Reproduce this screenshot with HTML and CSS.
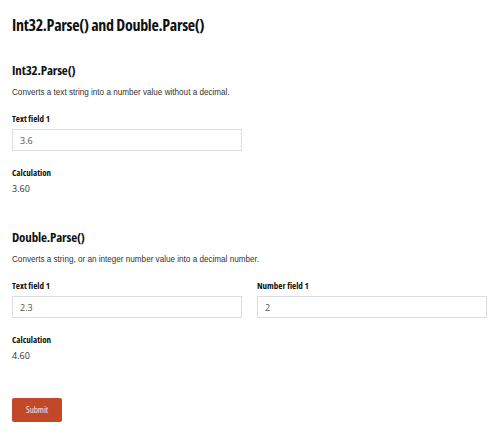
FILE: index.html
```html
<!DOCTYPE html>
<html lang="en">
<head>
<meta charset="utf-8">
<title>Int32.Parse() and Double.Parse()</title>
<link rel="stylesheet" href="styles.css">
</head>
<body>
<main class="page">
  <h1 class="title">Int32.Parse() and Double.Parse()</h1>

  <section class="section">
    <h2 class="section-title">Int32.Parse()</h2>
    <p class="desc">Converts a text string into a number value without a decimal.</p>
    <div class="fields">
      <div class="field">
        <label class="label" for="t1">Text field 1</label>
        <input class="input" id="t1" type="text" value="3.6">
      </div>
    </div>
    <div class="calc">
      <div class="label">Calculation</div>
      <div class="value">3.60</div>
    </div>
  </section>

  <section class="section">
    <h2 class="section-title">Double.Parse()</h2>
    <p class="desc">Converts a string, or an integer number value into a decimal number.</p>
    <div class="fields">
      <div class="field">
        <label class="label" for="t2">Text field 1</label>
        <input class="input" id="t2" type="text" value="2.3">
      </div>
      <div class="field">
        <label class="label" for="n1">Number field 1</label>
        <input class="input" id="n1" type="text" value="2">
      </div>
    </div>
    <div class="calc">
      <div class="label">Calculation</div>
      <div class="value">4.60</div>
    </div>
  </section>

  <div class="actions">
    <button class="submit" type="button">Submit</button>
  </div>
</main>
</body>
</html>
```

FILE: styles.css
```css
html, body {
  margin: 0;
  padding: 0;
  background: #ffffff;
}

.page {
  padding: 13px 13px 0 12px;
  font-family: "Open Sans", "Liberation Sans", sans-serif;
  color: #111;
}

.title {
  margin: 0;
  font-family: "Open Sans", sans-serif;
  font-stretch: 75%;
  font-weight: 700;
  font-size: 16px;
  letter-spacing: -0.3px;
  line-height: 24px;
  color: #111;
}

.section {
  margin-top: 24px;
}

.section + .section {
  margin-top: 33px;
}

.section-title {
  margin: 0;
  font-family: "Open Sans", sans-serif;
  font-stretch: 75%;
  font-weight: 700;
  font-size: 13px;
  letter-spacing: -0.15px;
  line-height: 18px;
  color: #111;
}

.desc {
  margin: 8px 0 0;
  font-family: "Liberation Sans", Arial, sans-serif;
  font-size: 8.15px;
  line-height: 12px;
  color: #333;
}

.fields {
  margin-top: 14px;
  display: grid;
  grid-template-columns: 1fr 1fr;
  column-gap: 15px;
}

.field {
  display: flex;
  flex-direction: column;
}

.label {
  display: block;
  font-family: "Open Sans", sans-serif;
  font-stretch: 75%;
  font-weight: 700;
  font-size: 9px;
  line-height: 12px;
  color: #111;
}

.field .label {
  margin-bottom: 4px;
}

.input {
  box-sizing: border-box;
  height: 22px;
  width: 100%;
  margin: 0;
  padding: 0 7px;
  border: 1px solid #dcdcdc;
  border-radius: 0;
  background: #fff;
  font-family: "Open Sans", sans-serif;
  font-size: 9px;
  color: #555;
  outline: none;
}

.calc {
  margin-top: 16px;
}

.value {
  margin-top: 4px;
  font-family: "Open Sans", sans-serif;
  font-size: 9px;
  line-height: 12px;
  color: #333;
}

.actions {
  margin-top: 34px;
}

.submit {
  box-sizing: border-box;
  width: 50px;
  height: 24px;
  padding: 0;
  border: none;
  border-radius: 2px;
  background: #c3482a;
  color: #fbe9e2;
  font-family: "Open Sans", sans-serif;
  font-stretch: 75%;
  font-size: 9px;
  cursor: pointer;
}
```
